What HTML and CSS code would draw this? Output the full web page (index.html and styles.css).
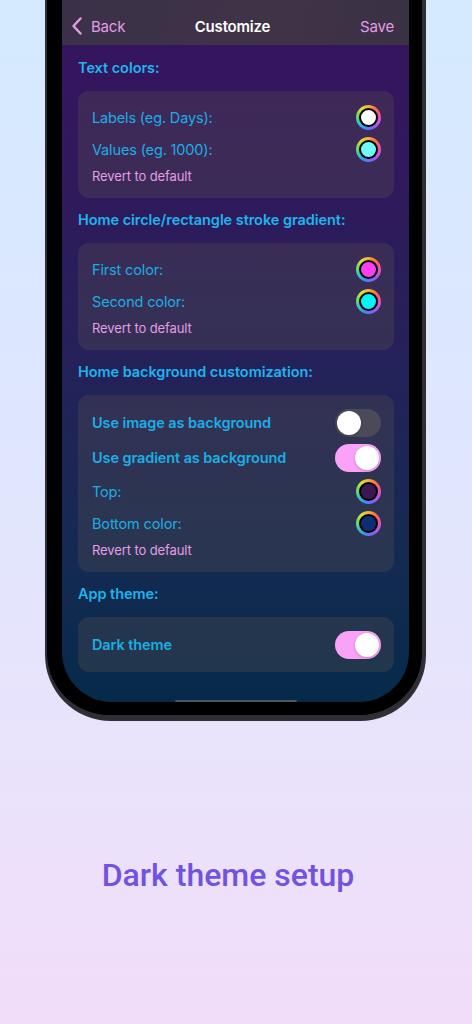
FILE: index.html
```html
<!DOCTYPE html>
<html lang="en">
<head>
    <meta charset="UTF-8">
    <meta name="viewport" content="width=device-width, initial-scale=1.0">
    <title>Dark theme setup</title>
    <link rel="stylesheet" href="styles.css">
</head>
<body>

    <!-- Phone frame, cut off by the top of the page -->
    <div class="phone-shell">
        <div class="bezel">
            <div class="screen">

                <!-- Navigation bar -->
                <div class="nav-bar">
                    <div class="nav-back">
                        <svg class="chevron" width="12" height="18" viewBox="0 0 12 18">
                            <path d="M9.5 1.5 L2.5 9 L9.5 16.5" fill="none" stroke="#e69be8" stroke-width="2.4" stroke-linecap="round" stroke-linejoin="round"/>
                        </svg>
                        <span>Back</span>
                    </div>
                    <div class="nav-title">Customize</div>
                    <div class="nav-save">Save</div>
                </div>

                <div class="content">

                    <!-- Text colors -->
                    <h2 class="section-title">Text colors:</h2>
                    <div class="card">
                        <div class="row">
                            <span class="label">Labels (eg. Days):</span>
                            <span class="well"><span class="well-fill fill-white"></span></span>
                        </div>
                        <div class="row">
                            <span class="label">Values (eg. 1000):</span>
                            <span class="well"><span class="well-fill fill-aqua"></span></span>
                        </div>
                        <div class="revert">Revert to default</div>
                    </div>

                    <!-- Stroke gradient -->
                    <h2 class="section-title">Home circle/rectangle stroke gradient:</h2>
                    <div class="card">
                        <div class="row">
                            <span class="label">First color:</span>
                            <span class="well"><span class="well-fill fill-magenta"></span></span>
                        </div>
                        <div class="row">
                            <span class="label">Second color:</span>
                            <span class="well"><span class="well-fill fill-cyan"></span></span>
                        </div>
                        <div class="revert">Revert to default</div>
                    </div>

                    <!-- Home background -->
                    <h2 class="section-title">Home background customization:</h2>
                    <div class="card">
                        <div class="row row-toggle">
                            <span class="label label-bold">Use image as background</span>
                            <span class="toggle"><span class="knob"></span></span>
                        </div>
                        <div class="row row-toggle">
                            <span class="label label-bold">Use gradient as background</span>
                            <span class="toggle toggle-on"><span class="knob"></span></span>
                        </div>
                        <div class="row">
                            <span class="label">Top:</span>
                            <span class="well"><span class="well-fill fill-plum"></span></span>
                        </div>
                        <div class="row">
                            <span class="label">Bottom color:</span>
                            <span class="well"><span class="well-fill fill-navy"></span></span>
                        </div>
                        <div class="revert">Revert to default</div>
                    </div>

                    <!-- App theme -->
                    <h2 class="section-title">App theme:</h2>
                    <div class="card card-single">
                        <div class="row row-toggle">
                            <span class="label label-bold">Dark theme</span>
                            <span class="toggle toggle-on"><span class="knob"></span></span>
                        </div>
                    </div>

                </div>

                <div class="home-indicator"></div>
            </div>
        </div>
    </div>

    <p class="caption">Dark theme setup</p>

</body>
</html>
```

FILE: styles.css
```css
/* Page background */
body {
    margin: 0;
    width: 472px;
    height: 1024px;
    overflow: hidden;
    background: linear-gradient(180deg, #d4eafe 0%, #dfe6fd 45%, #e9e3fc 72%, #f1ddf9 100%);
    font-family: Inter, "Noto Sans", sans-serif;
}

/* Phone frame */
.phone-shell {
    margin-left: 45px;
    width: 381px;
    box-sizing: border-box;
    padding: 0 4px 6px 2px;
    background: #2f2f33;
    border-radius: 0 0 66px 66px;
}

.bezel {
    background: #000;
    padding: 0 11px 13px 15px;
    border-radius: 0 0 62px 62px;
}

.screen {
    position: relative;
    width: 347px;
    height: 702px;
    overflow: hidden;
    border-radius: 0 0 50px 50px;
    background: linear-gradient(180deg, #37135f 0%, #30195c 25%, #25215a 50%, #142a52 80%, #062a4a 100%);
}

/* Navigation bar */
.nav-bar {
    height: 45px;
    box-sizing: border-box;
    display: grid;
    grid-template-columns: 1fr auto 1fr;
    align-items: center;
    padding: 7px 15px 0 9px;
    background: linear-gradient(100deg, #3a3148 0%, #3f3347 60%, #3a3145 100%);
    font-size: 15px;
    letter-spacing: -0.2px;
}

.nav-back {
    display: flex;
    align-items: center;
    gap: 8px;
    color: #e69be8;
}

.nav-title {
    color: #fff;
    font-weight: 600;
}

.nav-save {
    justify-self: end;
    color: #e69be8;
}

/* Settings list */
.content {
    padding: 13px 15px 0 16px;
}

.section-title {
    margin: 0 0 13px;
    font-size: 14.5px;
    line-height: 20px;
    font-weight: 600;
    letter-spacing: -0.05px;
    color: #1db4ee;
}

.card {
    background: rgba(86, 80, 78, 0.32);
    border-radius: 11px;
    padding: 10px 13px 13px 14px;
    margin-bottom: 12px;
}

.card-single {
    padding-bottom: 10px;
}

.row {
    height: 32px;
    display: flex;
    align-items: center;
    justify-content: space-between;
}

.row-toggle {
    height: 35px;
}

.label {
    font-size: 14.5px;
    letter-spacing: -0.15px;
    color: #1aaee6;
}

.label-bold {
    font-weight: 600;
    letter-spacing: -0.1px;
}

.revert {
    margin-top: 2px;
    font-size: 13px;
    line-height: 18px;
    letter-spacing: -0.1px;
    color: #e59de6;
}

/* Color picker wells */
.well {
    width: 25px;
    height: 25px;
    border-radius: 50%;
    box-sizing: border-box;
    padding: 3px;
    background: conic-gradient(#f4b02e, #fb6a4a, #ef4fa6, #c455e6, #7a63f2, #3d8cf6, #31c9c4, #6ddd5a, #d9e23a, #f4b02e);
}

.well-fill {
    display: block;
    width: 100%;
    height: 100%;
    box-sizing: border-box;
    border-radius: 50%;
    border: 2px solid #000;
}

.fill-white { background: #ffffff; }
.fill-aqua { background: #72fbfb; }
.fill-magenta { background: #fb3ff2; }
.fill-cyan { background: #00f6f8; }
.fill-plum { background: #3c1753; }
.fill-navy { background: #0e2d74; }

/* Switches */
.toggle {
    width: 46px;
    height: 28px;
    border-radius: 14px;
    background: #4b4a58;
    box-sizing: border-box;
    padding: 2px;
    display: flex;
}

.toggle-on {
    background: #f9a2f7;
    justify-content: flex-end;
}

.knob {
    width: 24px;
    height: 24px;
    border-radius: 50%;
    background: #fff;
    box-shadow: 0 1px 3px rgba(0, 0, 0, 0.2);
}

.home-indicator {
    position: absolute;
    left: 113px;
    bottom: 0;
    width: 122px;
    height: 2px;
    border-radius: 1px;
    background: #4a5566;
}

/* Caption under the phone */
.caption {
    margin: 135px 16px 0 0;
    text-align: center;
    font-family: Roboto, "Noto Sans", sans-serif;
    font-size: 32px;
    font-weight: 500;
    color: #7253e0;
}
```
